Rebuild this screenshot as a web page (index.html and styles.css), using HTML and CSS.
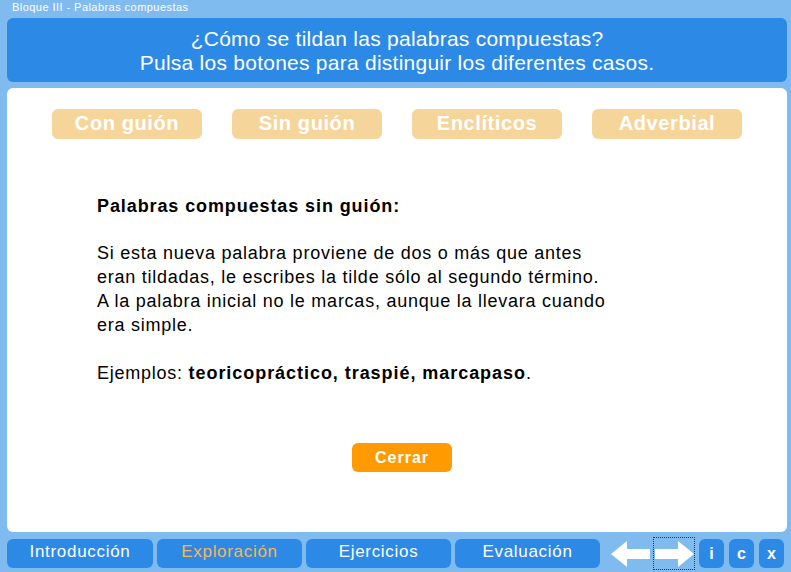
FILE: index.html
```html
<!DOCTYPE html>
<html lang="es">
<head>
<meta charset="utf-8">
<link rel="stylesheet" href="styles.css">
</head>
<body>
<div class="app">
  <div class="crumb">Bloque III - Palabras compuestas</div>
  <header class="head">
    <p>¿Cómo se tildan las palabras compuestas?</p>
    <p>Pulsa los botones para distinguir los diferentes casos.</p>
  </header>
  <main class="panel">
    <div class="tabs">
      <button class="tab">Con guión</button>
      <button class="tab">Sin guión</button>
      <button class="tab">Enclíticos</button>
      <button class="tab">Adverbial</button>
    </div>
    <section class="content">
      <h2 class="subtitle">Palabras compuestas sin guión:</h2>
      <p class="para">Si esta nueva palabra proviene de dos o más que antes<br>eran tildadas, le escribes la tilde sólo al segundo término.<br>A la palabra inicial no le marcas, aunque la llevara cuando<br>era simple.</p>
      <p class="para">Ejemplos: <b class="ex">teoricopráctico, traspié, marcapaso</b>.</p>
    </section>
    <div class="close-row"><button class="close">Cerrar</button></div>
  </main>
  <nav class="nav">
    <button class="nav-btn">Introducción</button>
    <button class="nav-btn">Exploración</button>
    <button class="nav-btn">Ejercicios</button>
    <button class="nav-btn">Evaluación</button>
    <div class="arrows">
      <span class="arrow">
        <svg width="40" height="30" viewBox="0 0 40 30"><path d="M0 15 L16 2 L16 10 L39 10 L39 20 L16 20 L16 28 Z" fill="#fff"/></svg>
      </span>
      <span class="arrow focus">
        <svg width="40" height="30" viewBox="0 0 40 30"><path d="M40 15 L24 2 L24 10 L1 10 L1 20 L24 20 L24 28 Z" fill="#fff"/></svg>
      </span>
    </div>
    <div class="minis">
      <button class="mini">i</button>
      <button class="mini">c</button>
      <button class="mini">x</button>
    </div>
  </nav>
</div>
</body>
</html>
```
FILE: styles.css
```css
html, body {
  margin: 0;
  padding: 0;
}
body {
  width: 791px;
  height: 572px;
  background: #80bbef;
  font-family: "Liberation Sans", Arial, sans-serif;
  overflow: hidden;
}
.app {
  display: flex;
  flex-direction: column;
  padding: 0 4px 0 7px;
  height: 572px;
  box-sizing: border-box;
}
.crumb {
  color: #fff;
  font-size: 11px;
  line-height: 13px;
  letter-spacing: 0.45px;
  padding: 1px 0 0 5px;
  height: 17px;
  box-sizing: border-box;
}
.head {
  margin-top: 1px;
  height: 64px;
  background: #2c89e6;
  border-radius: 6px;
  color: #fff;
  text-align: center;
  font-size: 21px;
  line-height: 24px;
  letter-spacing: 0.25px;
  padding-top: 9px;
  box-sizing: border-box;
}
.head p {
  margin: 0;
}
.panel {
  margin-top: 6px;
  height: 444px;
  background: #fff;
  border-radius: 6px;
  box-sizing: border-box;
  padding-top: 21px;
}
.tabs {
  display: flex;
  gap: 30px;
  padding-left: 45px;
}
.tab {
  width: 150px;
  height: 30px;
  border: none;
  border-radius: 6px;
  background: #f6d59b;
  color: #fff;
  font-family: "Liberation Sans", Arial, sans-serif;
  font-weight: bold;
  font-size: 20px;
  letter-spacing: 0.6px;
  padding: 0 0 2px;
}
.content {
  padding-left: 90px;
  padding-top: 55px;
  font-size: 18px;
  line-height: 24px;
  letter-spacing: 0.75px;
  color: #000;
}
.subtitle {
  margin: 0 0 23px;
  font-size: 18px;
  line-height: 24px;
  letter-spacing: 0.9px;
}
.para {
  margin: 0 0 24px;
}
.ex {
  letter-spacing: 0.95px;
}
.close-row {
  display: flex;
  padding-left: 345px;
  margin-top: 58px;
}
.close {
  width: 100px;
  height: 29px;
  border: none;
  border-radius: 6px;
  background: #ff9b00;
  color: #fff;
  font-family: "Liberation Sans", Arial, sans-serif;
  font-weight: bold;
  font-size: 16px;
  letter-spacing: 1px;
  padding: 0;
}
.nav {
  margin-top: 6px;
  display: flex;
  align-items: center;
  gap: 4px;
}
.nav-btn {
  width: 145px;
  height: 29px;
  border: none;
  border-radius: 6px;
  background: #2c89e6;
  color: #fff;
  font-family: "Liberation Sans", Arial, sans-serif;
  font-size: 17px;
  letter-spacing: 0.7px;
  padding: 0 0 3px;
}
.nav-btn:first-child {
  width: 146px;
}
.nav-btn:nth-child(2) {
  color: #f8b559;
}
.arrows {
  display: flex;
  align-items: center;
  margin-left: 7px;
  gap: 3px;
}
.arrow {
  display: flex;
  width: 40px;
  height: 31px;
  align-items: center;
  justify-content: center;
}
.arrow.focus {
  outline: 1px dotted #333;
  outline-offset: 0;
}
.minis {
  display: flex;
  gap: 5px;
  margin-left: 1px;
}
.mini {
  width: 25px;
  height: 29px;
  border: none;
  border-radius: 6px;
  background: #2c89e6;
  color: #fff;
  font-family: "Liberation Sans", Arial, sans-serif;
  font-weight: bold;
  font-size: 16px;
  padding: 0;
}
```
